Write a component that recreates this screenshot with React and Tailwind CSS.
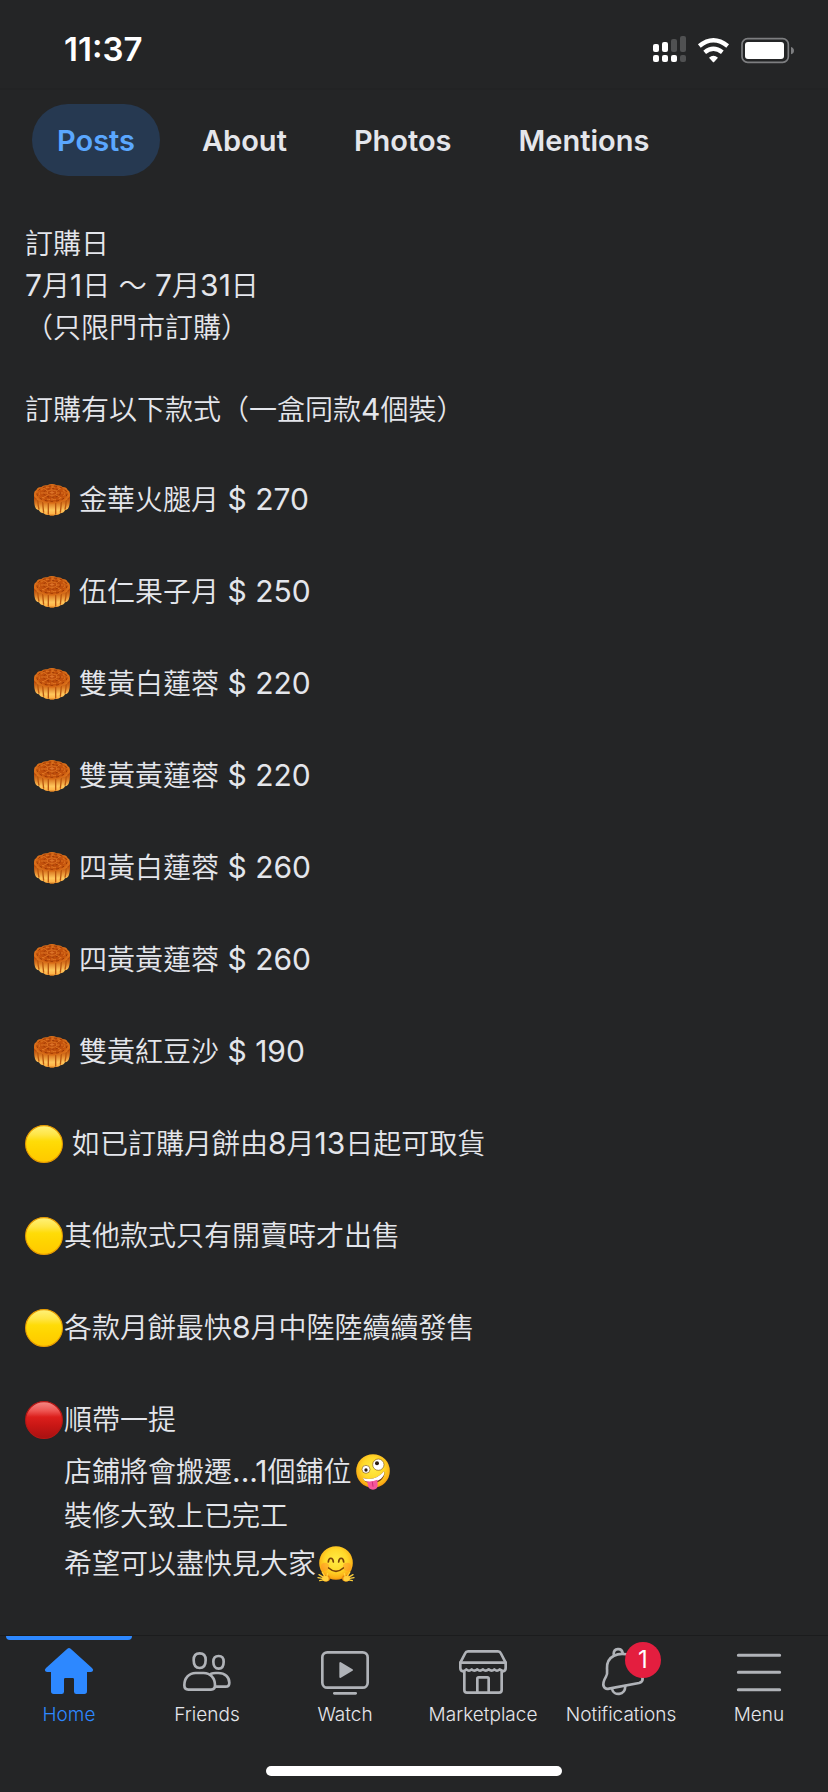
import React from "react";

const TABS = ["Posts", "About", "Photos", "Mentions"];

const MOONCAKES = [
  ["金華火腿月", "270"],
  ["伍仁果子月", "250"],
  ["雙黃白蓮蓉", "220"],
  ["雙黃黃蓮蓉", "220"],
  ["四黃白蓮蓉", "260"],
  ["四黃黃蓮蓉", "260"],
  ["雙黃紅豆沙", "190"],
];

/* Latin runs are set slightly larger than the Chinese text. */
function L({ children }) {
  return <span className="text-[30px] leading-none font-normal">{children}</span>;
}

function StatusIcons() {
  return (
    <svg viewBox="717 99 423 90" className="h-[30px] w-[141px]" aria-hidden="true">
      <g fill="#fff">
        <rect x="717" y="129" width="18" height="24" rx="6" />
        <rect x="744" y="123" width="18" height="30" rx="6" />
        <rect x="717" y="162" width="18" height="21" rx="6" />
        <rect x="744" y="162" width="18" height="21" rx="6" />
        <rect x="771" y="162" width="18" height="21" rx="6" />
      </g>
      <g fill="#505152">
        <rect x="771" y="114" width="18" height="39" rx="6" />
        <rect x="798" y="105" width="18" height="48" rx="6" />
        <rect x="798" y="162" width="18" height="21" rx="6" />
      </g>
      <g fill="none" stroke="#fff" strokeWidth="13">
        <path d="M856 135 Q898 100 941 135" />
        <path d="M872 154 Q898 133 925 154" />
      </g>
      <path d="M885 170 Q898 158 912 170 L901 182 Q898 185 896 182Z" fill="#fff" />
      <rect x="984" y="113" width="139" height="71" rx="17" fill="none" stroke="#7d7e80" strokeWidth="5" />
      <rect x="993" y="123" width="117" height="51" rx="9" fill="#fff" />
      <path d="M1131 138 Q1140 141 1140 149 Q1140 157 1131 160Z" fill="#7d7e80" />
    </svg>
  );
}

function Mooncake() {
  return (
    <svg viewBox="0 0 108 96" className="h-8 w-9 shrink-0" role="img" aria-label="mooncake">
      <defs>
        <linearGradient id="cake-side" x1="0" y1="0" x2="0" y2="1">
          <stop offset="0.2" stopColor="#b54a0b" />
          <stop offset="0.45" stopColor="#dc7a22" />
          <stop offset="0.75" stopColor="#ffc75c" />
          <stop offset="0.9" stopColor="#ffb548" />
          <stop offset="1" stopColor="#d9781c" />
        </linearGradient>
        <radialGradient id="cake-top">
          <stop offset="0" stopColor="#b8480a" />
          <stop offset="0.7" stopColor="#c3520c" />
          <stop offset="1" stopColor="#e0761c" />
        </radialGradient>
      </defs>
      <path
        d="M0 28 Q-1 54 3 68 Q6 78 15 79 Q19 88 29 88 Q35 95 44 92 Q54 99 64 92 Q73 95 79 88 Q89 88 93 79 Q102 78 105 68 Q109 54 108 28Z"
        fill="url(#cake-side)"
      />
      <path d="M11 45 Q12 65 15 77 M26 52 Q27 70 29 86 M43 56 V91 M65 56 V91 M82 52 Q81 70 79 86 M97 45 Q96 65 93 77" fill="none" stroke="#b9560f" strokeWidth="4" />
      <path
        d="M1 30 Q-1 22 7 18 Q10 9 22 9 Q29 2 40 4 Q54 -4 68 4 Q79 2 86 9 Q98 9 101 18 Q109 22 107 30 Q110 38 101 43 Q98 52 86 51 Q79 59 66 56 Q54 63 42 56 Q29 59 22 51 Q10 52 7 43 Q-2 38 1 30Z"
        fill="url(#cake-top)"
      />
      <g fill="none" stroke="#e67e28" strokeWidth="3" opacity="0.8">
        <ellipse cx="54" cy="28" rx="38" ry="19" strokeDasharray="9 8" />
        <ellipse cx="54" cy="26" rx="14" ry="8" />
        <path d="M54 18 V6 M66 22 L80 12 M68 27 H88 M65 32 L82 42 M54 35 V50 M43 32 L26 42 M40 27 H20 M42 22 L28 12" />
      </g>
      <g fill="none" stroke="#8f3004" strokeWidth="3" opacity="0.8">
        <ellipse cx="54" cy="27" rx="25" ry="13" strokeDasharray="6 7" />
        <ellipse cx="54" cy="29" rx="45" ry="23" strokeDasharray="8 9" />
      </g>
      <path d="M47 26 H61 M54 21 V31" stroke="#e0782c" strokeWidth="3" />
    </svg>
  );
}

function Dot({ red }) {
  const id = red ? "dot-red" : "dot-yellow";
  return (
    <svg viewBox="0 0 38 38" className="h-[38px] w-[38px] shrink-0" role="img" aria-label={red ? "red circle" : "yellow circle"}>
      <defs>
        <linearGradient id={id} x1="0" y1="0" x2="0" y2="1">
          <stop offset="0" stopColor={red ? "#f58a86" : "#fff27a"} />
          <stop offset="0.25" stopColor={red ? "#ee5552" : "#ffe545"} />
          <stop offset="0.42" stopColor={red ? "#dc1f1c" : "#ffdc08"} />
          <stop offset="0.65" stopColor={red ? "#c91715" : "#ffd400"} />
          <stop offset="1" stopColor={red ? "#a81111" : "#ffc800"} />
        </linearGradient>
      </defs>
      <circle cx="19" cy="19" r="18.4" fill={`url(#${id})`} stroke={red ? "#b51715" : "#e89c00"} strokeWidth="1.1" />
    </svg>
  );
}

function FaceGradient({ id }) {
  return (
    <radialGradient id={id} cx="0.5" cy="0.42" r="0.6">
      <stop offset="0" stopColor="#ffec45" />
      <stop offset="0.55" stopColor="#ffd829" />
      <stop offset="0.85" stopColor="#fbb016" />
      <stop offset="1" stopColor="#ee8a0c" />
    </radialGradient>
  );
}

function ZanyFace() {
  return (
    <svg viewBox="0 0 102 108" className="h-9 w-[34px] shrink-0" role="img" aria-label="zany face">
      <defs>
        <FaceGradient id="zany" />
      </defs>
      <circle cx="51" cy="51" r="50.5" fill="url(#zany)" />
      <circle cx="30" cy="46" r="12" fill="#fff" stroke="#8a5a12" strokeWidth="2" />
      <circle cx="30" cy="48" r="5" fill="#2b1a10" />
      <circle cx="67" cy="32" r="17" fill="#fff" stroke="#8a5a12" strokeWidth="2" />
      <circle cx="63" cy="28" r="6" fill="#2b1a10" />
      <path d="M21 72 C44 80 68 72 84 52 C90 66 74 88 50 88 C34 88 24 82 21 72Z" fill="#6b2f10" />
      <path d="M21 72 C44 80 68 72 84 52 C87 60 82 68 75 74 C60 85 38 86 26 80 C23 77 22 75 21 72Z" fill="#fff" />
      <path d="M33 82 Q49 84 64 77 L65 93 Q65 107 51 107 Q37 107 36 94Z" fill="#f5569c" />
      <path d="M49 83 L51 98" stroke="#cf2c78" strokeWidth="3" />
    </svg>
  );
}

function HuggingFace() {
  return (
    <svg viewBox="0 0 114 108" className="h-9 w-[38px] shrink-0" role="img" aria-label="hugging face">
      <defs>
        <FaceGradient id="hug" />
      </defs>
      <circle cx="57" cy="51" r="50.5" fill="url(#hug)" />
      <circle cx="24" cy="62" r="12" fill="#ff8a2a" opacity="0.45" />
      <circle cx="90" cy="62" r="12" fill="#ff8a2a" opacity="0.45" />
      <g fill="none" stroke="#7a4208" strokeWidth="5" strokeLinecap="round">
        <path d="M34 48 C35 33 48 33 49 48" />
        <path d="M65 48 C66 33 79 33 80 48" />
        <path d="M35 66 Q57 86 79 66" />
      </g>
      <ellipse cx="27" cy="97" rx="12" ry="10" fill="#e5880e" />
      <ellipse cx="87" cy="97" rx="12" ry="10" fill="#e5880e" />
      <g fill="none" stroke="#ffd03c" strokeWidth="4" strokeLinecap="round">
        <path d="M32 82 L29 94 M16 79 L24 92 M6 86 L20 94 M3 95 L20 98 M8 104 L22 101" />
        <path d="M82 82 L85 94 M98 79 L90 92 M108 86 L94 94 M111 95 L94 98 M106 104 L92 101" />
      </g>
      <ellipse cx="26" cy="98" rx="9" ry="8" fill="#ffd03c" />
      <ellipse cx="88" cy="98" rx="9" ry="8" fill="#ffd03c" />
    </svg>
  );
}

/* Tab bar icons share one 144 × 150 grid. */
function NavIcon({ children }) {
  return (
    <svg
      viewBox="0 0 144 150"
      className="h-[50px] w-12 overflow-visible"
      fill="none"
      stroke="#b0b3b8"
      strokeWidth="8"
      strokeLinejoin="round"
      strokeLinecap="round"
      aria-hidden="true"
    >
      {children}
    </svg>
  );
}

const NAV = [
  {
    label: "Home",
    active: true,
    icon: (
      <path
        d="M67 8 Q72 4 77 8 L141 66 Q147 72 143 76 Q141 78 137 78 H126 V136 Q126 144 118 144 H94 Q87 144 87 137 V100 Q87 96 83 96 H61 Q57 96 57 100 V137 Q57 144 50 144 H26 Q18 144 18 136 V78 H7 Q3 78 1 76 Q-3 72 3 66Z"
        fill="#2d88ff"
        stroke="none"
      />
    ),
  },
  {
    label: "Friends",
    icon: (
      <>
        <path d="M50 22 C63 22 68 30 68 42 C68 56 62 66 50 66 C38 66 32 56 32 42 C32 30 37 22 50 22Z" />
        <path d="M107 30 C118 30 122 37 122 47 C122 59 117 68 107 68 C97 68 91 59 91 47 C91 37 96 30 107 30Z" />
        <path d="M4 118 C4 96 18 81 38 81 H62 C82 81 96 96 96 118 C96 128 92 131 84 131 H16 C8 131 4 128 4 118Z" />
        <path d="M84 83 Q90 81 98 81 H106 C126 81 139 94 139 110 C139 119 135 122 128 122 H98" />
      </>
    ),
  },
  {
    label: "Watch",
    icon: (
      <>
        <rect x="4" y="19" width="136" height="106" rx="15" />
        <path d="M58 51 V93 L93 72Z" fill="#b0b3b8" strokeWidth="6" />
        <path d="M40 142 H104" />
      </>
    ),
  },
  {
    label: "Marketplace",
    icon: (
      <>
        <path d="M4 50 L19 21 Q21 16 27 16 H117 Q123 16 125 21 L140 50" />
        <path d="M4 50 H140 V66 Q140 74 133 76 Q126 72 122 70 Q114 78 106 70 Q98 78 89 70 Q80 78 72 70 Q63 78 55 70 Q46 78 38 70 Q30 78 22 70 Q18 74 11 76 Q4 74 4 66Z" />
        <path d="M16 76 V132 Q16 140 24 140 H120 Q128 140 128 132 V76" />
        <path d="M55 138 V98 Q55 94 59 94 H85 Q89 94 89 98 V138" />
      </>
    ),
  },
  {
    label: "Notifications",
    badge: "1",
    icon: (
      <>
        <path d="M50 24 C50 6 74 4 77 21" />
        <path d="M100 28 C64 16 28 30 30 68 C31 80 32 84 27 92 C21 102 17 112 20 121 C23 128 28 130 36 128 L126 111 Q137 108 137 98 L130 82" />
        <path d="M45 129 C50 150 84 150 85 120" />
      </>
    ),
  },
  {
    label: "Menu",
    icon: <path d="M10 28 H134 M10 79 H134 M10 131 H134" strokeWidth="9" />,
  },
];

export default function App() {
  return (
    <div className="flex min-h-screen flex-col bg-[#242526] font-[Inter,'Noto_Sans_CJK_TC',sans-serif] text-[#e4e6eb]">
      <header>
        <div className="flex h-[90px] items-center justify-between border-b-2 border-[#222324] pt-[10px] pr-[34px] pl-16">
          <time className="text-[33px] leading-10 font-semibold text-white">11:37</time>
          <StatusIcons />
        </div>
        <nav aria-label="Page sections" className="flex gap-[17px] px-8 pt-[14px]">
          {TABS.map((tab, i) => (
            <a
              key={tab}
              href={`#${tab.toLowerCase()}`}
              className={
                i === 0
                  ? "flex h-[72px] items-center rounded-full bg-[#263951] px-[25px] pt-px text-[29px] font-semibold text-[#5aa7ff]"
                  : "flex h-[72px] items-center rounded-full px-[25px] pt-px text-[29px] font-semibold"
              }
            >
              {tab}
            </a>
          ))}
        </nav>
      </header>

      <main className="flex-1 px-[25px] pt-[47px] text-[28px] leading-[42px] font-[350] whitespace-pre">
        <p>訂購日</p>
        <p>
          <L>7</L>月<L>1</L>日<L> </L>～<L> 7</L>月<L>31</L>日
        </p>
        <p>（只限門市訂購）</p>
        <p className="mt-10">
          訂購有以下款式（一盒同款<L>4</L>個裝）
        </p>

        <ul className="mt-11 flex flex-col gap-[42px]">
          {MOONCAKES.map(([name, price]) => (
            <li key={name} className="flex h-[50px] items-center gap-[9px] pl-[9px]">
              <Mooncake />
              <span>
                {name}
                <L> $ {price}</L>
              </span>
            </li>
          ))}
          <li className="flex h-[50px] items-center gap-[9px]">
            <Dot />
            <span>
              如已訂購月餅由<L>8</L>月<L>13</L>日起可取貨
            </span>
          </li>
          <li className="flex h-[50px] items-center gap-px">
            <Dot />
            <span>其他款式只有開賣時才出售</span>
          </li>
          <li className="flex h-[50px] items-center gap-px">
            <Dot />
            <span>
              各款月餅最快<L>8</L>月中陸陸續續發售
            </span>
          </li>
          <li className="flex flex-col">
            <div className="flex h-[50px] items-center gap-px">
              <Dot red />
              <span>順帶一提</span>
            </div>
            <div className="pl-[39px]">
              <p className="flex h-[50px] items-center gap-1 pt-1">
                <span>
                  店鋪將會搬遷<L>...1</L>個鋪位
                </span>
                <ZanyFace />
              </p>
              <p>裝修大致上已完工</p>
              <p className="flex h-[50px] items-center gap-px pt-1">
                <span>希望可以盡快見大家</span>
                <HuggingFace />
              </p>
            </div>
          </li>
        </ul>
      </main>

      <footer className="border-t border-[#1b1c1d]">
        <nav aria-label="Main" className="grid grid-cols-6">
          {NAV.map(({ label, icon, active, badge }) => (
            <a key={label} href={`#${label.toLowerCase()}`} className="flex flex-col items-center">
              <span className={active ? "mb-[6px] h-1 w-[126px] rounded-b bg-[#2d88ff]" : "mb-[6px] h-1"} />
              <span className="relative">
                <NavIcon>{icon}</NavIcon>
                {badge && (
                  <span className="absolute -top-1 left-7 flex h-9 w-9 items-center justify-center rounded-full bg-[#e41e3f] text-2xl text-white">
                    {badge}
                  </span>
                )}
              </span>
              <span
                className={
                  active
                    ? "mt-[7px] text-[19px] leading-6 font-[350] text-[#2d88ff]"
                    : "mt-[7px] text-[19px] leading-6 font-[350]"
                }
              >
                {label}
              </span>
            </a>
          ))}
        </nav>
        <div className="mx-auto mt-[39px] mb-4 h-[10px] w-[296px] rounded-full bg-white" />
      </footer>
    </div>
  );
}
